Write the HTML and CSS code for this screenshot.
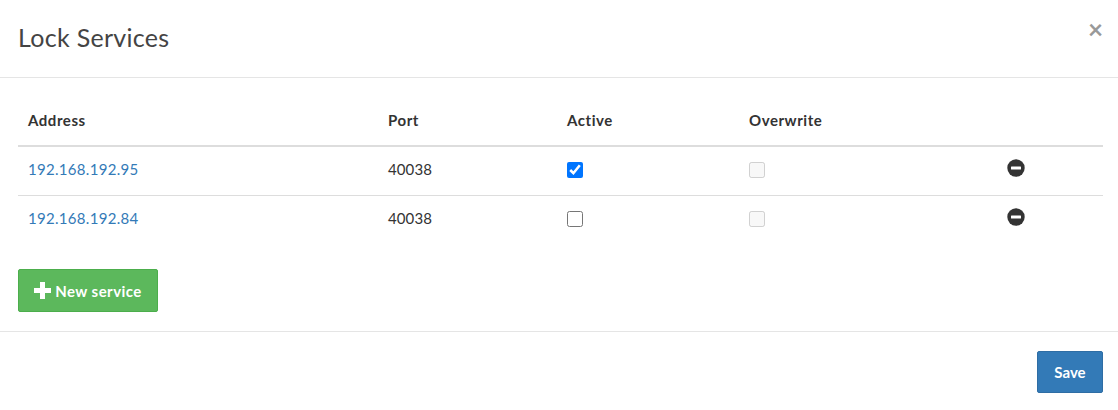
FILE: index.html
```html
<!DOCTYPE html>
<html lang="en">

<head>
    <meta charset="UTF-8">
    <title>Lock Services</title>
    <link rel="stylesheet" href="styles.css">
</head>

<body>
    <div class="modal">
        <div class="modal-header">
            <h4>Lock Services</h4>
            <button class="close">&times;</button>
        </div>
        <div class="modal-body">
            <table>
                <thead>
                    <tr>
                        <th class="col-address">Address</th>
                        <th class="col-port">Port</th>
                        <th class="col-active">Active</th>
                        <th class="col-overwrite">Overwrite</th>
                        <th></th>
                    </tr>
                </thead>
                <tbody>
                    <tr>
                        <td><a href="#">192.168.192.95</a></td>
                        <td class="port">40038</td>
                        <td><input type="checkbox" checked></td>
                        <td><input type="checkbox" disabled></td>
                        <td>
                            <svg class="remove" viewBox="0 0 18 18">
                                <circle cx="9" cy="9" r="8.7" fill="#333"/>
                                <rect x="4" y="7.5" width="10" height="3" rx="0.5" fill="#fff"/>
                            </svg>
                        </td>
                    </tr>
                    <tr>
                        <td><a href="#">192.168.192.84</a></td>
                        <td class="port">40038</td>
                        <td><input type="checkbox"></td>
                        <td><input type="checkbox" disabled></td>
                        <td>
                            <svg class="remove" viewBox="0 0 18 18">
                                <circle cx="9" cy="9" r="8.7" fill="#333"/>
                                <rect x="4" y="7.5" width="10" height="3" rx="0.5" fill="#fff"/>
                            </svg>
                        </td>
                    </tr>
                </tbody>
            </table>
            <button class="btn btn-success">
                <svg class="plus" viewBox="0 0 17 17">
                    <path d="M6 0h5v6h6v5h-6v6H6v-6H0V6h6z" fill="#fff"/>
                </svg>
                New service
            </button>
        </div>
        <div class="modal-footer">
            <button class="btn btn-primary">Save</button>
        </div>
    </div>
</body>
</html>
```

FILE: styles.css
```css
* {
    box-sizing: border-box;
}

body {
    margin: 0;
    font-family: Lato, "Open Sans", sans-serif;
    font-size: 15px;
    line-height: 1.42857;
    color: #333;
    background-color: #fff;
}

.modal {
    width: 1118px;
    height: 410px;
}

.modal-header {
    display: flex;
    justify-content: space-between;
    align-items: flex-start;
    height: 78px;
    padding: 19px 18px 0;
    border-bottom: 1px solid #e5e5e5;
}

h4 {
    margin: 0;
    font-size: 25px;
    font-weight: 400;
    line-height: 36px;
    letter-spacing: 0.3px;
    color: #444;
}

.close {
    margin: 0 -3px 0 0;
    padding: 0;
    border: none;
    background: none;
    font-family: inherit;
    font-size: 26px;
    font-weight: 700;
    line-height: 20px;
    color: #999;
}

.modal-body {
    padding: 18px 15px 0 18px;
    height: 254px;
    border-bottom: 1px solid #e5e5e5;
}

table {
    width: 1085px;
    border-collapse: collapse;
    table-layout: fixed;
}

th,
td {
    padding: 0 10px;
    text-align: left;
}

th {
    height: 50px;
    font-weight: 700;
    letter-spacing: 0.55px;
    border-bottom: 2px solid #ddd;
}

td {
    height: 49px;
    padding-bottom: 2px;
    letter-spacing: 0.3px;
    border-bottom: 1px solid #ddd;
}

td.port {
    letter-spacing: 0.1px;
}

tbody tr:last-child td {
    border-bottom: none;
}

.col-address {
    width: 360px;
}

.col-port {
    width: 179px;
}

.col-active {
    width: 182px;
}

.col-overwrite {
    width: 259px;
}

a {
    color: #337ab7;
    text-decoration: none;
}

input[type="checkbox"] {
    display: block;
    width: 16px;
    height: 16px;
    margin: 0;
}

.remove {
    display: block;
    width: 18px;
    height: 18px;
    margin: -3px 0 0 -1px;
}

.btn {
    display: inline-flex;
    align-items: center;
    justify-content: center;
    border: 1px solid transparent;
    border-radius: 2px;
    font-family: inherit;
    font-size: 15px;
    font-weight: 700;
    color: #fff;
}

.btn-success {
    width: 140px;
    height: 43px;
    margin-top: 25px;
    gap: 4px;
    letter-spacing: 0.45px;
    background-color: #5cb85c;
    border-color: #4cae4c;
}

.plus {
    width: 17px;
    height: 17px;
}

.btn-primary {
    width: 66px;
    height: 42px;
    background-color: #337ab7;
    border-color: #2e6da4;
}

.modal-footer {
    display: flex;
    justify-content: flex-end;
    padding: 19px 15px 0 0;
}
```
